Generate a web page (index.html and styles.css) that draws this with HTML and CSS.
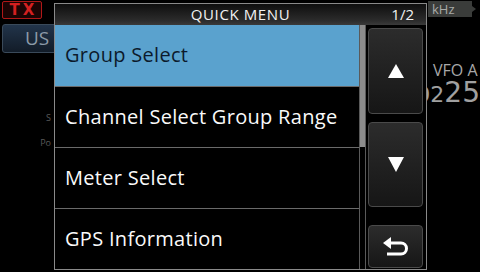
FILE: index.html
```html
<!DOCTYPE html>
<html>
<head>
<meta charset="utf-8">
<link rel="stylesheet" href="styles.css">
</head>
<body>
<div class="screen">
  <div class="left">
    <div class="tx">TX</div>
    <div class="us">US</div>
    <div class="meter-s">S</div>
    <div class="meter-po">Po</div>
  </div>
  <div class="right">
    <div class="khz">kHz<span class="khz-tip"></span></div>
    <div class="vfo">VFO A</div>
    <div class="freq"><span class="freq-small">02</span><span class="freq-big">25</span></div>
  </div>

  <div class="dialog">
    <div class="titlebar">
      <span class="title">QUICK MENU</span>
      <span class="page">1/2</span>
    </div>
    <div class="body">
      <ul class="list">
        <li class="item selected">Group Select</li>
        <li class="item">Channel Select Group Range</li>
        <li class="item">Meter Select</li>
        <li class="item">GPS Information</li>
      </ul>
      <div class="scroll"><div class="thumb"></div></div>
      <div class="buttons">
        <div class="btn btn-tall">
          <svg width="16" height="14" viewBox="0 0 16 14"><polygon points="8,0 16,14 0,14" fill="#fff"/></svg>
        </div>
        <div class="btn btn-tall btn-down">
          <svg width="16" height="15" viewBox="0 0 16 15"><polygon points="0,0 16,0 8,15" fill="#fff"/></svg>
        </div>
        <div class="btn btn-short">
          <svg width="26" height="20" viewBox="0 0 26 20"><polygon points="0,6 8,0 8,12" fill="#fff"/><path d="M7 6 H18 A5.5 5.5 0 0 1 18 17 H4" fill="none" stroke="#fff" stroke-width="3"/></svg>
        </div>
      </div>
    </div>
  </div>
</div>
</body>
</html>
```
FILE: styles.css
```css
html, body {
  margin: 0;
  padding: 0;
  background: #000;
}
.screen {
  position: relative;
  width: 480px;
  height: 272px;
  overflow: hidden;
  display: flex;
  justify-content: space-between;
  font-family: "Open Sans", "Noto Sans", sans-serif;
}
.left {
  width: 60px;
  display: flex;
  flex-direction: column;
  align-items: flex-start;
}
.tx {
  margin: 1px 0 0 2px;
  width: 38px;
  height: 16px;
  border: 1px solid #b01818;
  border-radius: 2px;
  background: #1c0404;
  color: #d42020;
  font-family: "DejaVu Sans", sans-serif;
  font-weight: bold;
  font-size: 15px;
  line-height: 16px;
  text-align: center;
  letter-spacing: 3px;
  text-indent: 3px;
}
.us {
  margin: 5px 0 0 2px;
  width: 58px;
  height: 27px;
  border: 1px solid #3a4a5a;
  border-radius: 3px;
  background: linear-gradient(#22344a, #121c28);
  color: #8c9aa8;
  font-size: 19px;
  line-height: 27px;
  padding-left: 22px;
  box-sizing: content-box;
}
.meter-s, .meter-po {
  align-self: stretch;
  width: 51px;
  text-align: right;
  color: #5a5a5a;
  font-size: 9px;
  line-height: 10px;
}
.meter-s { margin-top: 60px; }
.meter-po { margin-top: 15px; }
.right {
  width: 52px;
  display: flex;
  flex-direction: column;
  align-items: flex-end;
}
.khz {
  position: relative;
  align-self: flex-start;
  margin-top: 1px;
  width: 40px;
  height: 16px;
  padding-left: 4px;
  background: #3a3c3a;
  color: #a8aaa8;
  font-size: 13px;
  line-height: 16px;
}
.khz-tip {
  position: absolute;
  right: -4px;
  top: 5px;
  border-left: 4px solid #3a3c3a;
  border-top: 3px solid transparent;
  border-bottom: 3px solid transparent;
}
.vfo {
  align-self: flex-start;
  margin: 44px 0 0 5px;
  color: #a8a8a8;
  font-size: 16px;
  line-height: 18px;
  white-space: nowrap;
}
.freq {
  margin-top: 0;
  color: #a0a0a0;
  white-space: nowrap;
  line-height: 28px;
  font-family: "DejaVu Sans", sans-serif;
}
.freq-small { font-size: 22px; }
.freq-big { font-size: 28px; }

.dialog {
  position: absolute;
  left: 54px;
  top: 3px;
  width: 371px;
  height: 265px;
  border: 1px solid #8a8a8a;
  background: #000;
  display: flex;
  flex-direction: column;
}
.titlebar {
  height: 21px;
  background: linear-gradient(#0e0e0e, #2c2c2c 80%, #3a3a3a);
  position: relative;
  color: #f2f2f2;
  font-size: 15px;
  line-height: 21px;
  text-align: center;
}
.title { letter-spacing: 0.6px; }
.page {
  position: absolute;
  right: 12px;
  top: 0;
  font-size: 15px;
}
.body {
  flex: 1;
  display: flex;
}
.list {
  margin: 0;
  padding: 0;
  list-style: none;
  width: 304px;
}
.item {
  height: 60px;
  border-top: 1px solid #6a6a6a;
  padding-left: 10px;
  color: #fafafa;
  font-size: 20px;
  letter-spacing: 0.3px;
  line-height: 60px;
  white-space: nowrap;
}
.item.selected {
  height: 61px;
  border-top: none;
  background: #5aa2ce;
  color: #0c1a2c;
}
.scroll {
  width: 5px;
  border-left: 1px solid #5a5a5a;
  border-right: 1px solid #5a5a5a;
}
.thumb {
  height: 122px;
  background: #8c8c8c;
}
.buttons {
  flex: 1;
  display: flex;
  flex-direction: column;
  padding: 3px 3px 1px 2px;
  gap: 8px;
}
.btn {
  border: 1px solid #4a4a4a;
  border-radius: 4px;
  background: linear-gradient(#2c2c2c, #161616);
  display: flex;
  align-items: center;
  justify-content: center;
  box-sizing: border-box;
}
.btn-tall { height: 86px; }
.btn-down { height: 85px; }
.btn-short { height: 43px; margin-top: 10px; }
```
